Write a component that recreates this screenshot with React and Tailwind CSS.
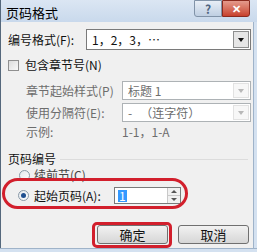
import React from "react";

const font = { fontFamily: '"Noto Sans CJK SC", "Liberation Sans", sans-serif' };

function Arrow({ disabled }) {
  return (
    <div
      className={`w-[16px] h-full flex items-center justify-center border ${
        disabled ? "border-[#e2e2e2] bg-[#f7f7f7]" : "border-[#8e8f8f] bg-[#e6e6e6]"
      }`}
    >
      <div
        className={`w-0 h-0 border-l-[3px] border-r-[3px] border-t-[4px] border-l-transparent border-r-transparent ${
          disabled ? "border-t-[#b8b8b8]" : "border-t-[#111]"
        }`}
      />
    </div>
  );
}

function Combo({ width, height, disabled, children }) {
  return (
    <div
      className={`flex items-stretch bg-white border p-[1px] ${
        disabled ? "border-[#adb2b5] text-[#6d6d6d]" : "border-[#7a7a7a] text-[#111]"
      } ${width} ${height}`}
    >
      <div className="flex-1 flex items-center pl-[4px] whitespace-pre">{children}</div>
      <Arrow disabled={disabled} />
    </div>
  );
}

function Radio({ checked }) {
  return (
    <div className="w-[11px] h-[11px] rounded-full border border-[#8a9aa8] bg-gradient-to-br from-[#e4e8ec] to-[#fdfdfd] flex items-center justify-center">
      {checked && <div className="w-[5px] h-[5px] rounded-full bg-[#1f4f8f]" />}
    </div>
  );
}

export default function App() {
  return (
    <div
      className="relative w-[257px] h-[252px] overflow-hidden bg-[#cddbeb] text-[12px] leading-none text-[#111]"
      style={font}
    >
      {/* title bar */}
      <div className="h-[22px] flex items-start bg-gradient-to-b from-[#dbe6f3] to-[#c9d9ec] border-l border-[#55687c]">
        <div className="flex-1 pl-[5px] pt-[6px] text-[13px] text-black">页码格式</div>
        <div className="flex mr-[7px]">
          <div className="w-[28px] h-[17px] flex items-center justify-center bg-gradient-to-b from-[#e8eef6] to-[#bfcfe2] border border-[#8193a8] rounded-bl-[3px] text-[#4f6580] text-[12px] font-bold">
            ?
          </div>
          <div className="w-[28px] h-[17px] flex items-center justify-center bg-gradient-to-b from-[#e49a8c] to-[#c7402c] border border-[#8b2a1e] rounded-br-[3px] text-white text-[11px] font-bold">
            ✕
          </div>
        </div>
      </div>

      {/* body */}
      <div className="flex h-[226px]">
        <div className="w-[253px] bg-[#f0f0f0] border-l border-[#55687c] flex flex-col pl-[7px]">
          <div className="flex items-center mt-[7px]">
            <div className="w-[78px]">编号格式(F):</div>
            <Combo width="w-[165px]" height="h-[21px]">1，2，3，…</Combo>
          </div>

          <div className="flex items-center mt-[9px] h-[12px]">
            <div className="w-[11px] h-[11px] border border-[#8f8f8f] bg-gradient-to-br from-[#dcdcdc] to-[#f8f8f8]" />
            <div className="ml-[6px]">包含章节号(N)</div>
          </div>

          <div className="flex items-center mt-[10px] pl-[18px] text-[#6d6d6d]">
            <div className="w-[96px]">章节起始样式(P)</div>
            <Combo width="w-[129px]" height="h-[19px]" disabled>
              标题 1
            </Combo>
          </div>

          <div className="flex items-center mt-[3px] pl-[18px] text-[#6d6d6d]">
            <div className="w-[96px]">使用分隔符(E):</div>
            <Combo width="w-[129px]" height="h-[19px]" disabled>
              {"-   （连字符）"}
            </Combo>
          </div>

          <div className="flex items-center mt-[4px] h-[12px] pl-[18px] text-[#6d6d6d]">
            <div className="w-[96px]">示例:</div>
            <div>1-1，1-A</div>
          </div>

          <div className="flex items-center mt-[15px] h-[12px] pr-[5px]">
            <div>页码编号</div>
            <div className="flex-1 ml-[4px] border-t border-[#dcdcdc]" />
          </div>

          <div className="flex items-center mt-[4px] h-[12px] pl-[11px]">
            <Radio />
            <div className="ml-[4px] text-[#444]">续前节(C)</div>
          </div>

          <div className="flex items-center mt-[6px] pl-[10px]">
            <Radio checked />
            <div className="ml-[5px] w-[80px]">起始页码(A):</div>
            <div className="w-[67px] h-[17px] flex items-stretch bg-white border border-[#7a7a7a]">
              <div className="flex-1 flex items-center pl-[3px]">
                <span className="bg-[#3399ff] text-white px-[1px]">1</span>
              </div>
              <div className="w-[13px] flex flex-col border-l border-[#c9c9c9] bg-[#f1f1f1]">
                <div className="flex-1 flex items-center justify-center border-b border-[#c9c9c9]">
                  <div className="w-0 h-0 border-l-[3px] border-r-[3px] border-b-[3px] border-l-transparent border-r-transparent border-b-[#555]" />
                </div>
                <div className="flex-1 flex items-center justify-center">
                  <div className="w-0 h-0 border-l-[3px] border-r-[3px] border-t-[3px] border-l-transparent border-r-transparent border-t-[#555]" />
                </div>
              </div>
            </div>
          </div>

          <div className="flex mt-[21px] pl-[89px] gap-[10px]">
            <div className="w-[71px] h-[19px] flex items-center justify-center rounded-[3px] border border-[#707070] bg-gradient-to-b from-[#f2f2f2] to-[#d6d6d6] text-[13px]">
              确定
            </div>
            <div className="w-[71px] h-[19px] flex items-center justify-center rounded-[3px] border border-[#707070] bg-gradient-to-b from-[#f2f2f2] to-[#d6d6d6] text-[13px]">
              取消
            </div>
          </div>
        </div>
        <div className="flex-1 bg-[#d4e1f0] border-l border-[#9fb3c9]" />
      </div>

      {/* bottom frame */}
      <div className="h-[4px] bg-[#d4e1f0] border-t border-[#9fb3c9]" />

      {/* red annotations */}
      <div className="absolute left-[2px] top-[178px] w-[186px] h-[31px] rounded-[16px] border-[3px] border-[#d21f2c]" />
      <div className="absolute left-[92px] top-[222px] w-[80px] h-[26px] rounded-[5px] border-[3px] border-[#d21f2c]" />
    </div>
  );
}
